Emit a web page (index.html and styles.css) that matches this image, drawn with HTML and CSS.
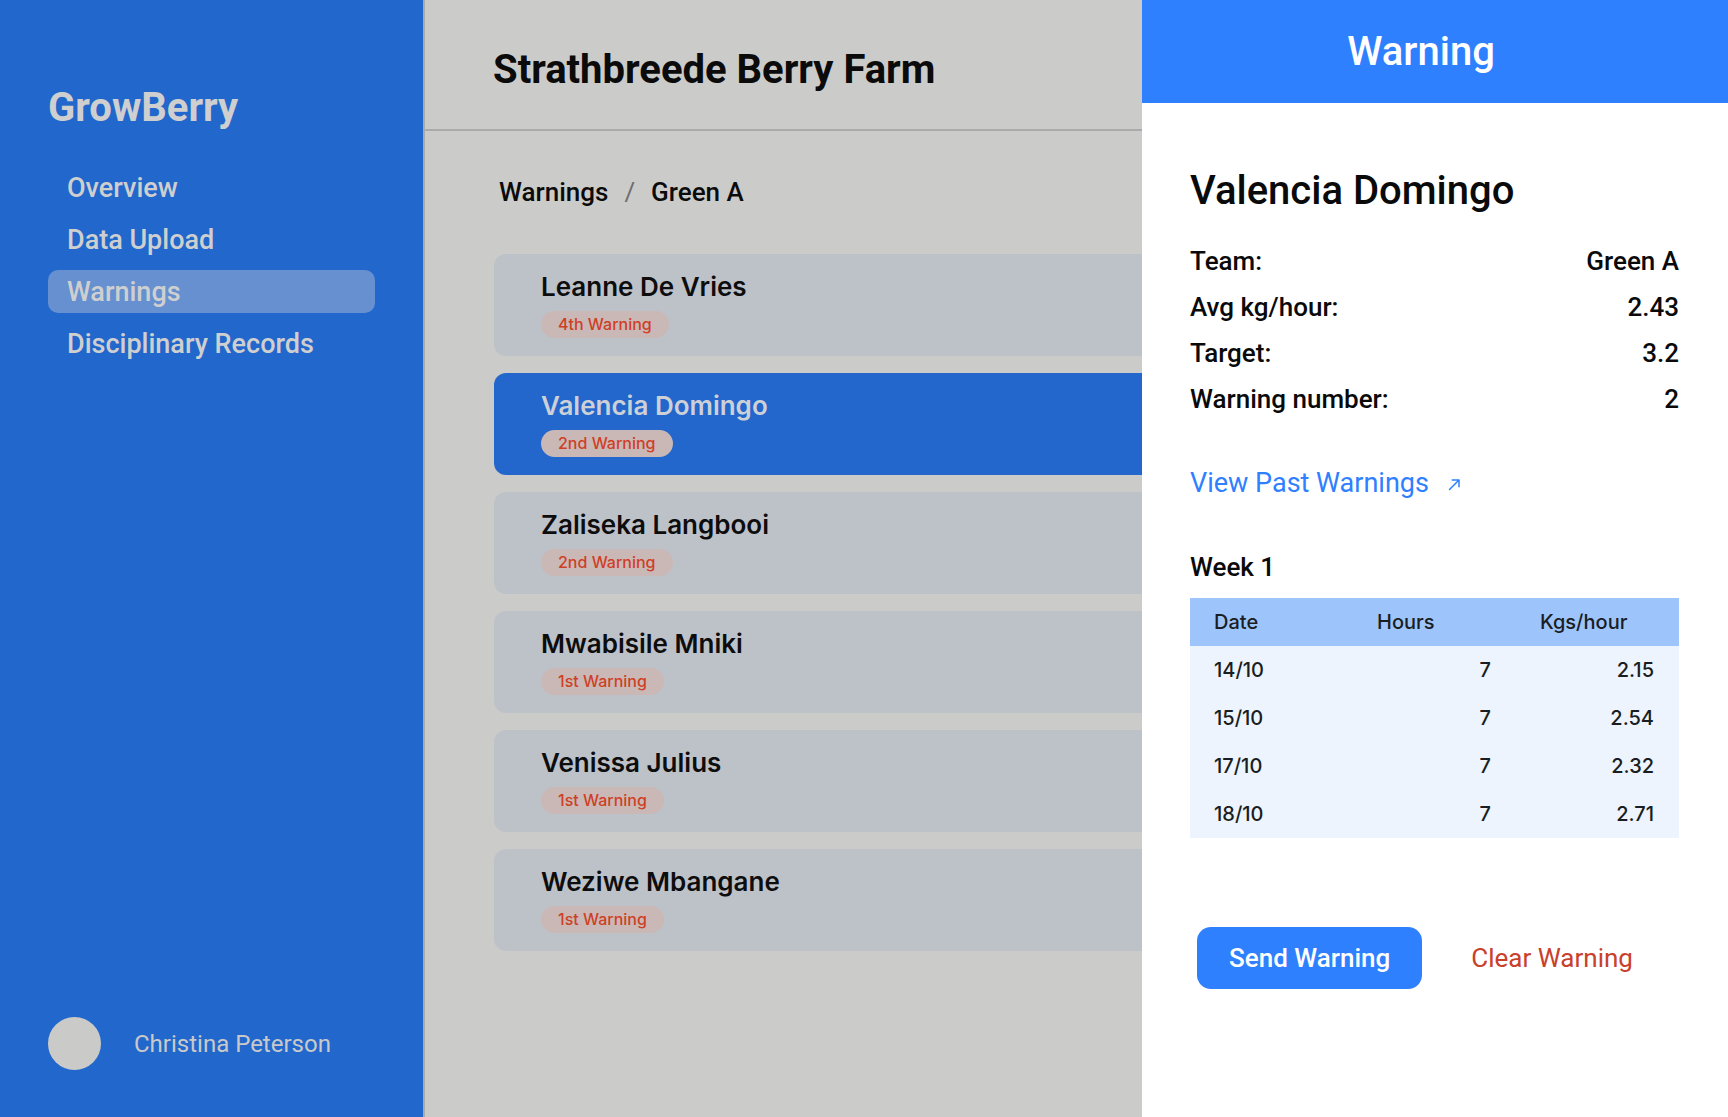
FILE: index.html
```html
<!DOCTYPE html>
<html lang="en">
<head>
<meta charset="utf-8">
<title>GrowBerry – Warnings</title>
<link rel="stylesheet" href="styles.css">
</head>
<body>
<aside class="sidebar">
  <div class="brand">GrowBerry</div>
  <nav class="nav">
    <a class="nav-item">Overview</a>
    <a class="nav-item">Data Upload</a>
    <a class="nav-item active">Warnings</a>
    <a class="nav-item">Disciplinary Records</a>
  </nav>
  <div class="user">
    <div class="avatar"></div>
    <div class="user-name">Christina Peterson</div>
  </div>
</aside>

<main class="main">
  <header class="main-header">
    <h1 class="farm-title">Strathbreede Berry Farm</h1>
  </header>
  <div class="breadcrumb">
    <span>Warnings</span>
    <span class="sep">/</span>
    <span>Green A</span>
  </div>
  <ul class="cards">
    <li class="card">
      <div class="card-name">Leanne De Vries</div>
      <span class="badge">4th Warning</span>
    </li>
    <li class="card selected">
      <div class="card-name">Valencia Domingo</div>
      <span class="badge">2nd Warning</span>
    </li>
    <li class="card">
      <div class="card-name">Zaliseka Langbooi</div>
      <span class="badge">2nd Warning</span>
    </li>
    <li class="card">
      <div class="card-name">Mwabisile Mniki</div>
      <span class="badge">1st Warning</span>
    </li>
    <li class="card">
      <div class="card-name">Venissa Julius</div>
      <span class="badge">1st Warning</span>
    </li>
    <li class="card">
      <div class="card-name">Weziwe Mbangane</div>
      <span class="badge">1st Warning</span>
    </li>
  </ul>
</main>

<aside class="drawer">
  <div class="drawer-header">Warning</div>
  <div class="drawer-body">
    <h2 class="worker-name">Valencia Domingo</h2>
    <div class="info">
      <div class="info-row"><span>Team:</span><span>Green A</span></div>
      <div class="info-row"><span>Avg kg/hour:</span><span>2.43</span></div>
      <div class="info-row"><span>Target:</span><span>3.2</span></div>
      <div class="info-row"><span>Warning number:</span><span>2</span></div>
    </div>
    <a class="past-link">View Past Warnings
      <svg class="ext-icon" width="15" height="15" viewBox="0 0 15 15" aria-hidden="true">
        <path d="M2.5 12.5 L12 3 M5.2 3 H12 V9.8" fill="none" stroke="#2f80ff" stroke-width="1.5" stroke-linecap="round" stroke-linejoin="round"/>
      </svg>
    </a>
    <div class="week">Week 1</div>
    <table class="data-table">
      <thead>
        <tr><th>Date</th><th>Hours</th><th>Kgs/hour</th></tr>
      </thead>
      <tbody>
        <tr><td>14/10</td><td class="num">7</td><td class="num">2.15</td></tr>
        <tr><td>15/10</td><td class="num">7</td><td class="num">2.54</td></tr>
        <tr><td>17/10</td><td class="num">7</td><td class="num">2.32</td></tr>
        <tr><td>18/10</td><td class="num">7</td><td class="num">2.71</td></tr>
      </tbody>
    </table>
    <div class="actions">
      <button class="btn-primary">Send Warning</button>
      <button class="btn-text">Clear Warning</button>
    </div>
  </div>
</aside>
</body>
</html>
```

FILE: styles.css
```css
* { box-sizing: border-box; }

html, body {
  margin: 0;
  padding: 0;
  height: 100%;
}

body {
  display: flex;
  height: 100vh;
  overflow: hidden;
  font-family: Roboto, "Liberation Sans", Arial, sans-serif;
  background: #cbcbca;
}

/* Sidebar */
.sidebar {
  width: 425px;
  flex: 0 0 425px;
  background: #2267cc;
  border-right: 2px solid #aaaaaa;
  display: flex;
  flex-direction: column;
  padding: 84px 48px 47px 48px;
  color: #cfcfcf;
}

.brand {
  font-size: 40px;
  font-weight: 700;
  line-height: 48px;
  color: #cfcfcf;
}

.nav {
  display: flex;
  flex-direction: column;
  gap: 9px;
  margin-top: 34px;
}

.nav-item {
  display: block;
  height: 43px;
  line-height: 44px;
  padding-left: 19px;
  font-size: 27px;
  font-weight: 500;
  color: #cfcfcf;
  border-radius: 10px;
}

.nav-item.active {
  background: #6690d0;
}

.user {
  margin-top: auto;
  display: flex;
  align-items: center;
  gap: 33px;
}

.avatar {
  width: 53px;
  height: 53px;
  border-radius: 50%;
  background: #cacac9;
}

.user-name {
  font-size: 24px;
  line-height: 28px;
  color: #c9c9c9;
}

/* Main */
.main {
  flex: 1;
  min-width: 0;
  background: #cbcbca;
}

.main-header {
  height: 131px;
  border-bottom: 2px solid #aaaaaa;
  padding: 46px 0 0 68px;
}

.farm-title {
  margin: 0;
  font-size: 40px;
  font-weight: 700;
  line-height: 48px;
  color: #0b0b0b;
}

.breadcrumb {
  margin-top: 45px;
  padding-left: 74px;
  font-size: 26px;
  font-weight: 500;
  line-height: 32px;
  color: #0b0b0b;
  display: flex;
}

.breadcrumb .sep {
  margin: 0 16px;
  color: #6e6e6e;
  font-weight: 400;
}

.cards {
  list-style: none;
  margin: 46px 0 0 0;
  padding: 0 69px;
  display: flex;
  flex-direction: column;
  gap: 17px;
}

.card {
  height: 102px;
  background: #bdc1c8;
  border-radius: 12px;
  padding: 17px 0 0 47px;
  display: flex;
  flex-direction: column;
  align-items: flex-start;
  font-family: Inter, "Noto Sans", sans-serif;
}

.card.selected {
  background: #2367cc;
}

.card-name {
  font-size: 26px;
  font-weight: 600;
  line-height: 31px;
  color: #0d0d0d;
}

.card.selected .card-name {
  color: #cdd1d7;
}

.badge {
  margin-top: 9px;
  height: 27px;
  line-height: 27px;
  padding: 0 17px;
  border-radius: 14px;
  background: #cab8b6;
  color: #cf3f26;
  font-size: 16px;
  font-weight: 500;
}

/* Drawer */
.drawer {
  position: fixed;
  top: 0;
  right: 0;
  width: 586px;
  height: 100vh;
  background: #ffffff;
  display: flex;
  flex-direction: column;
}

.drawer-header {
  height: 103px;
  flex: 0 0 103px;
  background: #2f80ff;
  color: #ffffff;
  font-size: 40px;
  font-weight: 500;
  display: flex;
  align-items: center;
  justify-content: center;
  padding-right: 28px;
}

.drawer-body {
  padding: 0 49px 0 48px;
  color: #0a0a0a;
}

.worker-name {
  margin: 64px 0 0 0;
  font-size: 40px;
  font-weight: 500;
  line-height: 48px;
}

.info {
  margin-top: 23px;
}

.info-row {
  display: flex;
  justify-content: space-between;
  font-size: 26px;
  font-weight: 500;
  line-height: 46px;
}

.past-link {
  display: flex;
  align-items: center;
  gap: 18px;
  margin-top: 45px;
  font-size: 27px;
  line-height: 32px;
  color: #2f80ff;
}

.ext-icon {
  margin-top: 2px;
}

.week {
  margin-top: 52px;
  font-size: 26px;
  font-weight: 500;
  line-height: 32px;
}

.data-table {
  margin-top: 15px;
  width: 100%;
  border-collapse: collapse;
  table-layout: fixed;
  font-family: Inter, "Noto Sans", sans-serif;
  font-size: 20px;
  font-weight: 500;
  color: #1a1d21;
}

.data-table th,
.data-table td {
  height: 48px;
  padding: 0 25px 0 24px;
  text-align: left;
  vertical-align: middle;
}

.data-table thead tr {
  background: #9ec4fc;
}

.data-table th {
  font-weight: 500;
}

.data-table tbody tr {
  background: #edf4fe;
}

.data-table td.num {
  text-align: right;
}

.actions {
  margin-top: 89px;
  padding-left: 7px;
  display: flex;
  align-items: center;
  gap: 17px;
}

.btn-primary {
  height: 62px;
  padding: 0 32px;
  border: none;
  border-radius: 14px;
  background: #2f80ff;
  color: #ffffff;
  font-family: Roboto, "Liberation Sans", sans-serif;
  font-size: 26px;
  font-weight: 500;
}

.btn-text {
  height: 62px;
  padding: 0 32px;
  border: none;
  background: transparent;
  color: #c9402b;
  font-family: Roboto, "Liberation Sans", sans-serif;
  font-size: 26px;
  font-weight: 400;
}
```
